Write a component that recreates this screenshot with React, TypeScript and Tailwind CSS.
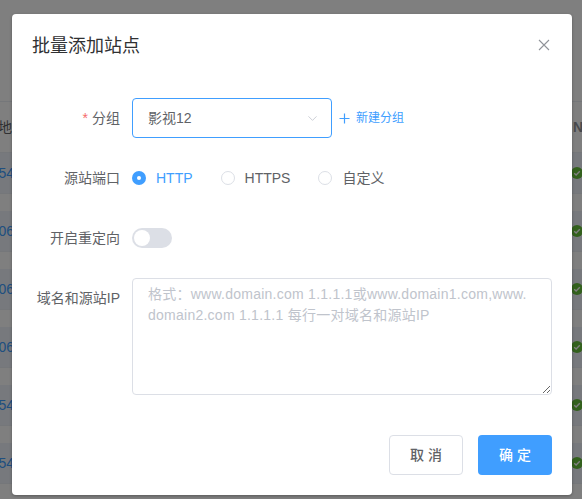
import { ChevronDown } from 'lucide-react';

const rows = [
  { ip: '192.168.10.154' },
  { ip: '192.168.10.106' },
  { ip: '192.168.10.106' },
  { ip: '192.168.10.106' },
  { ip: '192.168.10.154' },
  { ip: '192.168.10.154' },
];

function CheckDot() {
  return (
    <svg width="12" height="12" viewBox="0 0 12 12">
      <circle cx="6" cy="6" r="6" fill="#67c23a" />
      <path d="M3.2 6.2 5.1 8 8.8 4.3" fill="none" stroke="#fff" strokeWidth="1.4" />
    </svg>
  );
}

// the site list behind the dialog
function SiteTable() {
  return (
    <div className="pt-[101px] text-sm text-[#606266]">
      <div className="flex h-[52px] items-center border-y border-[#ebeef5]">
        <div className="-ml-[30px] w-[44px] shrink-0 whitespace-nowrap">源站地址</div>
        <div className="flex-1" />
        <div className="-mr-[49px] w-[60px] shrink-0 pl-[2px] font-semibold text-[#909399]">NAT</div>
      </div>
      {rows.map((r, i) => (
        <div key={i} className="flex h-[58px] flex-col">
          <div className="flex h-[40px] items-center bg-[#eef3fa]">
            <div className="-ml-[106px] w-[120px] shrink-0 text-right text-[#409eff]">{r.ip}</div>
            <div className="flex-1" />
            <div className="-mr-[49px] w-[60px] shrink-0">
              <CheckDot />
            </div>
          </div>
          <div className="h-[18px] border-t border-[#ebeef5]" />
        </div>
      ))}
    </div>
  );
}

function Radio({ label, checked }: { label: string; checked?: boolean }) {
  return (
    <label className="mr-[28px] flex items-center gap-[10px]">
      {checked ? (
        <span className="flex h-[14px] w-[14px] items-center justify-center rounded-full bg-[#409eff]">
          <span className="h-[4px] w-[4px] rounded-full bg-white" />
        </span>
      ) : (
        <span className="h-[14px] w-[14px] rounded-full border border-[#dcdfe6] bg-white" />
      )}
      <span className={checked ? 'text-[#409eff]' : 'text-[#606266]'}>{label}</span>
    </label>
  );
}

function FormRow({ label, required, children }: { label: string; required?: boolean; children: React.ReactNode }) {
  return (
    <div className="flex">
      <div className="w-[100px] shrink-0 pr-3 text-right text-sm leading-[40px] text-[#606266]">
        {required && <span className="mr-1 text-[#f56c6c]">*</span>}
        {label}
      </div>
      <div className="flex min-h-[40px] flex-1 items-center">{children}</div>
    </div>
  );
}

export default function App() {
  return (
    <div className="relative h-[499px] w-full overflow-hidden bg-white font-['Liberation_Sans','Noto_Sans_CJK_SC',sans-serif]">
      <SiteTable />
      <div className="absolute inset-0 bg-black/50" />

      <div className="absolute left-[12px] top-[14px] flex h-[481px] w-[560px] flex-col rounded-sm bg-white shadow-[0_1px_3px_rgba(0,0,0,0.3)]">
        <div className="flex items-center justify-between px-5 pb-[10px] pt-5">
          <span className="text-lg leading-6 text-[#303133]">批量添加站点</span>
          <svg width="16" height="16" viewBox="0 0 16 16" className="-mt-[2px]">
            <path d="M3 3 13 13M13 3 3 13" stroke="#909399" strokeWidth="1.1" />
          </svg>
        </div>

        <div className="flex flex-col gap-5 px-5 py-[30px] text-sm">
          <FormRow label="分组" required>
            <div className="flex h-10 w-[200px] items-center justify-between rounded border border-[#409eff] pl-[15px] pr-[11px] text-[#606266]">
              <span>影视12</span>
              <ChevronDown size={15} strokeWidth={1.3} color="#c0c4cc" />
            </div>
            <span className="ml-[7px] flex items-center gap-[6px] text-xs text-[#409eff]">
              <svg width="11" height="11" viewBox="0 0 11 11">
                <path d="M5.5 0.5v10M0.5 5.5h10" stroke="#409eff" strokeWidth="1.2" />
              </svg>
              新建分组
            </span>
          </FormRow>

          <FormRow label="源站端口">
            <div className="flex items-center">
              <Radio label="HTTP" checked />
              <Radio label="HTTPS" />
              <Radio label="自定义" />
            </div>
          </FormRow>

          <FormRow label="开启重定向">
            <span className="flex h-5 w-10 items-center rounded-full bg-[#dcdfe6] px-[2px]">
              <span className="h-4 w-4 rounded-full bg-white" />
            </span>
          </FormRow>

          <FormRow label="域名和源站IP">
            <textarea
              rows={5}
              readOnly
              placeholder={'格式：www.domain.com 1.1.1.1或www.domain1.com,www.\ndomain2.com 1.1.1.1 每行一对域名和源站IP'}
              className="block w-full resize-y rounded border border-[#dcdfe6] px-[15px] py-[5px] text-sm leading-[21px] tracking-[0.25px] text-[#606266] outline-none placeholder:text-[#c0c4cc]"
            />
          </FormRow>
        </div>

        <div className="flex justify-end gap-[15px] px-5 pb-5 pt-[10px]">
          <button
            type="button"
            className="h-10 w-[74px] rounded border border-[#dcdfe6] bg-white text-sm font-medium text-[#606266]"
          >
            取 消
          </button>
          <button type="button" className="h-10 w-[74px] rounded bg-[#409eff] text-sm font-medium text-white">
            确 定
          </button>
        </div>
      </div>
    </div>
  );
}
